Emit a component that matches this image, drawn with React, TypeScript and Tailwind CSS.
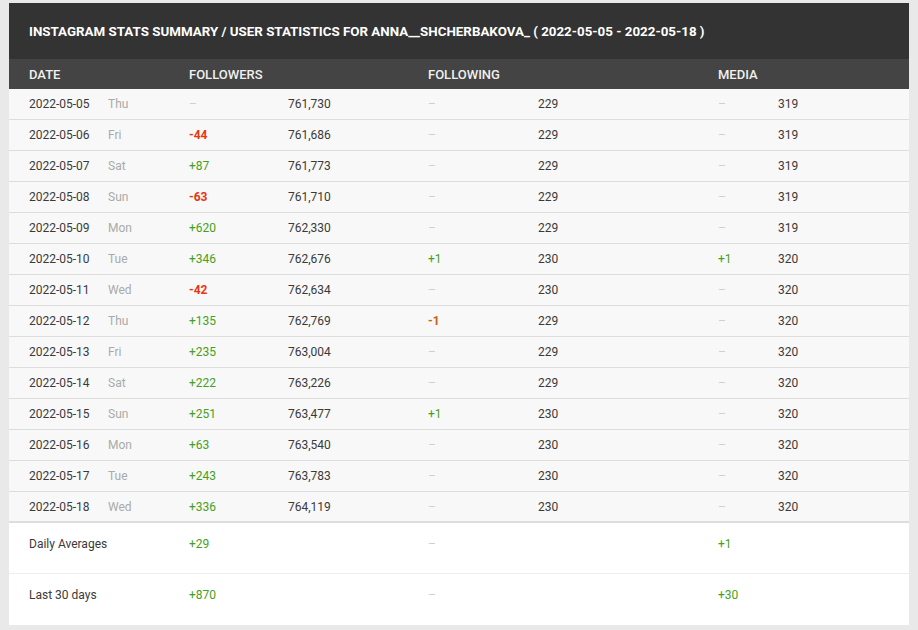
import React from "react";

type Row = [string, string, string, string, string, string, string, string];

const rows: Row[] = [
  ["2022-05-05", "Thu", "–", "761,730", "–", "229", "–", "319"],
  ["2022-05-06", "Fri", "-44", "761,686", "–", "229", "–", "319"],
  ["2022-05-07", "Sat", "+87", "761,773", "–", "229", "–", "319"],
  ["2022-05-08", "Sun", "-63", "761,710", "–", "229", "–", "319"],
  ["2022-05-09", "Mon", "+620", "762,330", "–", "229", "–", "319"],
  ["2022-05-10", "Tue", "+346", "762,676", "+1", "230", "+1", "320"],
  ["2022-05-11", "Wed", "-42", "762,634", "–", "230", "–", "320"],
  ["2022-05-12", "Thu", "+135", "762,769", "-1", "229", "–", "320"],
  ["2022-05-13", "Fri", "+235", "763,004", "–", "229", "–", "320"],
  ["2022-05-14", "Sat", "+222", "763,226", "–", "229", "–", "320"],
  ["2022-05-15", "Sun", "+251", "763,477", "+1", "230", "–", "320"],
  ["2022-05-16", "Mon", "+63", "763,540", "–", "230", "–", "320"],
  ["2022-05-17", "Tue", "+243", "763,783", "–", "230", "–", "320"],
  ["2022-05-18", "Wed", "+336", "764,119", "–", "230", "–", "320"],
];

function Diff({ v, small }: { v: string; small?: boolean }) {
  if (v === "–") return <span className="text-[#cfcfcf]">–</span>;
  if (v.startsWith("+")) return <span className="text-[#46a01c]">{v}</span>;
  if (small) return <span className="text-[#c8620e] font-bold">{v}</span>;
  return <span className="text-[#e8360f] font-bold">{v}</span>;
}

const grid = "grid grid-cols-[79px_81px_99px_140px_110px_180px_60px_1fr] pl-[20px]";

export default function App() {
  return (
    <div
      className="w-[918px] h-[630px] bg-[#e9e9ea] pt-[3px] pl-[9px] overflow-hidden"
      style={{ fontFamily: "Roboto, 'Liberation Sans', sans-serif" }}
    >
      <div className="w-[900px] bg-white">
        <div className="h-[56px] bg-[#333333] flex items-center pt-[2px] pl-[20px] text-white font-bold text-[13.35px] uppercase">
          Instagram Stats Summary / User Statistics for anna__shcherbakova_ ( 2022-05-05 - 2022-05-18 )
        </div>
        <div className={`${grid} h-[30px] items-center pt-[1px] bg-[#444444] text-[#f0f0f0] text-[13px] font-medium`}>
          <div className="col-span-2">DATE</div>
          <div className="col-span-2">FOLLOWERS</div>
          <div className="col-span-2">FOLLOWING</div>
          <div className="col-span-2">MEDIA</div>
        </div>
        {rows.map((r, i) => (
          <div
            key={i}
            className={`${grid} h-[31px] items-center bg-[#f8f8f8] text-[12px] text-[#3a3a3a] border-b ${
              i === rows.length - 1 ? "border-b-2" : ""
            } border-[#dddddd]`}
          >
            <div>{r[0]}</div>
            <div className="text-[#aaaaaa]">{r[1]}</div>
            <div><Diff v={r[2]} /></div>
            <div>{r[3]}</div>
            <div><Diff v={r[4]} small /></div>
            <div>{r[5]}</div>
            <div><Diff v={r[6]} small /></div>
            <div>{r[7]}</div>
          </div>
        ))}
        <div className={`${grid} h-[51px] pt-[12px] text-[12px] text-[#3a3a3a] border-b border-[#eeeeee]`}>
          <div className="col-span-2">Daily Averages</div>
          <div className="col-span-2 text-[#46a01c]">+29</div>
          <div className="col-span-2 text-[#cfcfcf]">–</div>
          <div className="col-span-2 text-[#46a01c]">+1</div>
        </div>
        <div className={`${grid} h-[51px] pt-[12px] text-[12px] text-[#3a3a3a]`}>
          <div className="col-span-2">Last 30 days</div>
          <div className="col-span-2 text-[#46a01c]">+870</div>
          <div className="col-span-2 text-[#cfcfcf]">–</div>
          <div className="col-span-2 text-[#46a01c]">+30</div>
        </div>
      </div>
    </div>
  );
}
